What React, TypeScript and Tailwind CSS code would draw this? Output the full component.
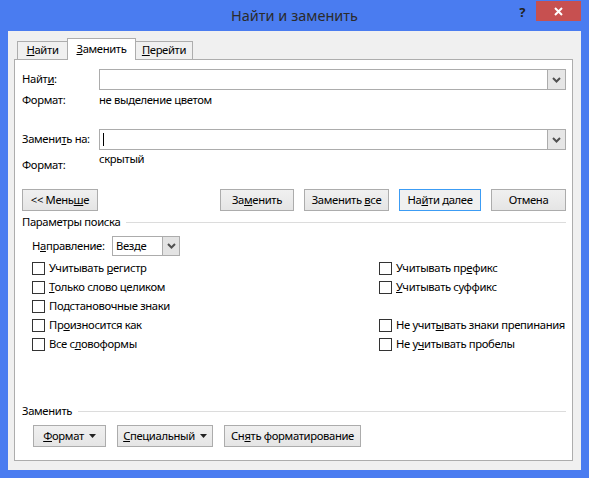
import React from 'react';

const font = { fontFamily: '"Noto Sans", "Open Sans", sans-serif' };

function Chevron() {
  return (
    <svg width="9" height="6" viewBox="0 0 9 6">
      <path d="M1 1 L4.5 4.5 L8 1" fill="none" stroke="#505050" strokeWidth="2" />
    </svg>
  );
}

function Caret() {
  return (
    <svg width="7" height="4" viewBox="0 0 7 4" className="ml-[5px] shrink-0">
      <path d="M0 0 H7 L3.5 4 Z" fill="#222" />
    </svg>
  );
}

function Combo({ cursor }: { cursor?: boolean }) {
  return (
    <div className="flex-1 h-[21px] flex border border-[#acacac] bg-white">
      <div className="flex-1 flex items-center pl-[3px]">
        {cursor && <div className="w-px h-[13px] bg-black" />}
      </div>
      <div className="w-[18px] h-full flex items-center justify-center bg-[#e6e6e6] border-l border-[#acacac]">
        <Chevron />
      </div>
    </div>
  );
}

function Btn({ children, w, primary, caret }: { children: React.ReactNode; w: string; primary?: boolean; caret?: boolean }) {
  return (
    <div
      className={`${w} h-[22px] flex items-center justify-center border ${
        primary ? 'border-[#3c9cf4] bg-[#f0f0f0]' : 'border-[#acacac] bg-gradient-to-b from-[#f0f0f0] to-[#e5e5e5]'
      }`}
    >
      <span className="whitespace-nowrap">{children}</span>
      {caret && <Caret />}
    </div>
  );
}

function Check({ children }: { children: React.ReactNode }) {
  return (
    <div className="h-[19px] flex items-center">
      <div className="w-[13px] h-[13px] border border-[#333] bg-white mr-[4px] shrink-0" />
      <span className="whitespace-nowrap">{children}</span>
    </div>
  );
}

function GroupHead({ children }: { children: React.ReactNode }) {
  return (
    <div className="h-[22px] flex items-center">
      <span className="whitespace-nowrap">{children}</span>
      <div className="flex-1 h-px bg-[#dcdcdc] ml-[6px]" />
    </div>
  );
}

export default function App() {
  return (
    <div className="w-[589px] h-[478px] bg-[#4a7cf0] flex flex-col text-[11.25px] tracking-[-0.35px] text-black" style={font}>
      <div className="h-[31px] grid grid-cols-[1fr_auto_1fr]">
        <div />
        <div className="text-[14.5px] tracking-normal text-[#2b2b2b] leading-[31px]">Найти и заменить</div>
        <div className="flex justify-end items-start">
          <div className="font-bold text-[13px] text-[#222] mt-[3px] mr-[11px]">?</div>
          <div className="mt-px mr-[8px] w-[45px] h-[20px] bg-[#c75050] flex items-center justify-center">
            <svg width="9" height="9" viewBox="0 0 9 9">
              <path d="M1 1 L8 8 M8 1 L1 8" stroke="#fff" strokeWidth="2" />
            </svg>
          </div>
        </div>
      </div>

      <div className="mx-[8px] h-[439px] bg-[#f0f0f0] pl-[6px] pr-[8px] pt-[7px]">
        <div className="h-[21px] flex items-end pl-[3px] relative z-10">
          <div className="w-[51px] h-[18px] border border-b-0 border-[#adadad] bg-[#f0f0f0] flex items-center justify-center">
            <span><u>Н</u>айти</span>
          </div>
          <div className="-ml-px w-[69px] h-[22px] -mb-px border border-b-0 border-[#adadad] bg-white flex items-center justify-center relative z-10">
            <span><u>З</u>аменить</span>
          </div>
          <div className="-ml-px w-[58px] h-[18px] border border-b-0 border-[#adadad] bg-[#f0f0f0] flex items-center justify-center">
            <span><u>П</u>ерейти</span>
          </div>
        </div>

        <div className="h-[402px] border border-[#adadad] bg-white flex flex-col pl-[7px] pr-[6px] pt-[9px]">
          <div className="h-[21px] flex items-center">
            <div className="w-[77px] whitespace-nowrap">Найт<u>и</u>:</div>
            <Combo />
          </div>
          <div className="h-[20px] flex items-center">
            <div className="w-[77px]">Формат:</div>
            <div>не выделение цветом</div>
          </div>
          <div className="h-[19px]" />
          <div className="h-[21px] flex items-center">
            <div className="w-[77px] whitespace-nowrap">Замени<u>т</u>ь на:</div>
            <Combo cursor />
          </div>
          <div className="h-[39px] flex items-start">
            <div className="w-[77px] pt-[7px]">Формат:</div>
            <div className="pt-px">скрытый</div>
          </div>

          <div className="flex items-center">
            <Btn w="w-[76px]">&lt;&lt; Мень<u>ш</u>е</Btn>
            <div className="flex-1" />
            <Btn w="w-[74px]">За<u>м</u>енить</Btn>
            <div className="w-[10px]" />
            <Btn w="w-[85px]">Заменить <u>в</u>се</Btn>
            <div className="w-[10px]" />
            <Btn w="w-[82px]" primary>На<u>й</u>ти далее</Btn>
            <div className="w-[10px]" />
            <Btn w="w-[75px]">Отмена</Btn>
          </div>

          <GroupHead>Параметры поиска</GroupHead>

          <div className="mt-[3px] pl-[10px] h-[20px] flex items-center">
            <div className="w-[80px] whitespace-nowrap">Н<u>а</u>правление:</div>
            <div className="w-[68px] h-[20px] flex border border-[#acacac] bg-white">
              <div className="flex-1 flex items-center pl-[3px]">Везде</div>
              <div className="w-[17px] flex items-center justify-center bg-[#e3e3e3] border-l border-[#acacac]">
                <Chevron />
              </div>
            </div>
          </div>

          <div className="mt-[3px] pl-[10px] grid grid-cols-[347px_1fr]">
            <div className="flex flex-col">
              <Check>Учитывать <u>р</u>егистр</Check>
              <Check><u>Т</u>олько слово целиком</Check>
              <Check>По<u>д</u>становочные знаки</Check>
              <Check>Пр<u>о</u>износится как</Check>
              <Check>Все с<u>л</u>овоформы</Check>
            </div>
            <div className="flex flex-col">
              <Check>Учитывать пр<u>е</u>фикс</Check>
              <Check><u>У</u>читывать суффикс</Check>
              <div className="h-[19px]" />
              <Check>Не учит<u>ы</u>вать знаки препинания</Check>
              <Check>Не у<u>ч</u>итывать пробелы</Check>
            </div>
          </div>

          <div className="flex-1" />
          <GroupHead>Заменить</GroupHead>
          <div className="mt-[3px] mb-[13px] pl-[11px] flex items-center gap-[11px]">
            <Btn w="w-[73px]" caret><u>Ф</u>ормат</Btn>
            <Btn w="w-[96px]" caret><u>С</u>пециальный</Btn>
            <Btn w="w-[137px]">Сн<u>я</u>ть форматирование</Btn>
          </div>
        </div>
      </div>
    </div>
  );
}
